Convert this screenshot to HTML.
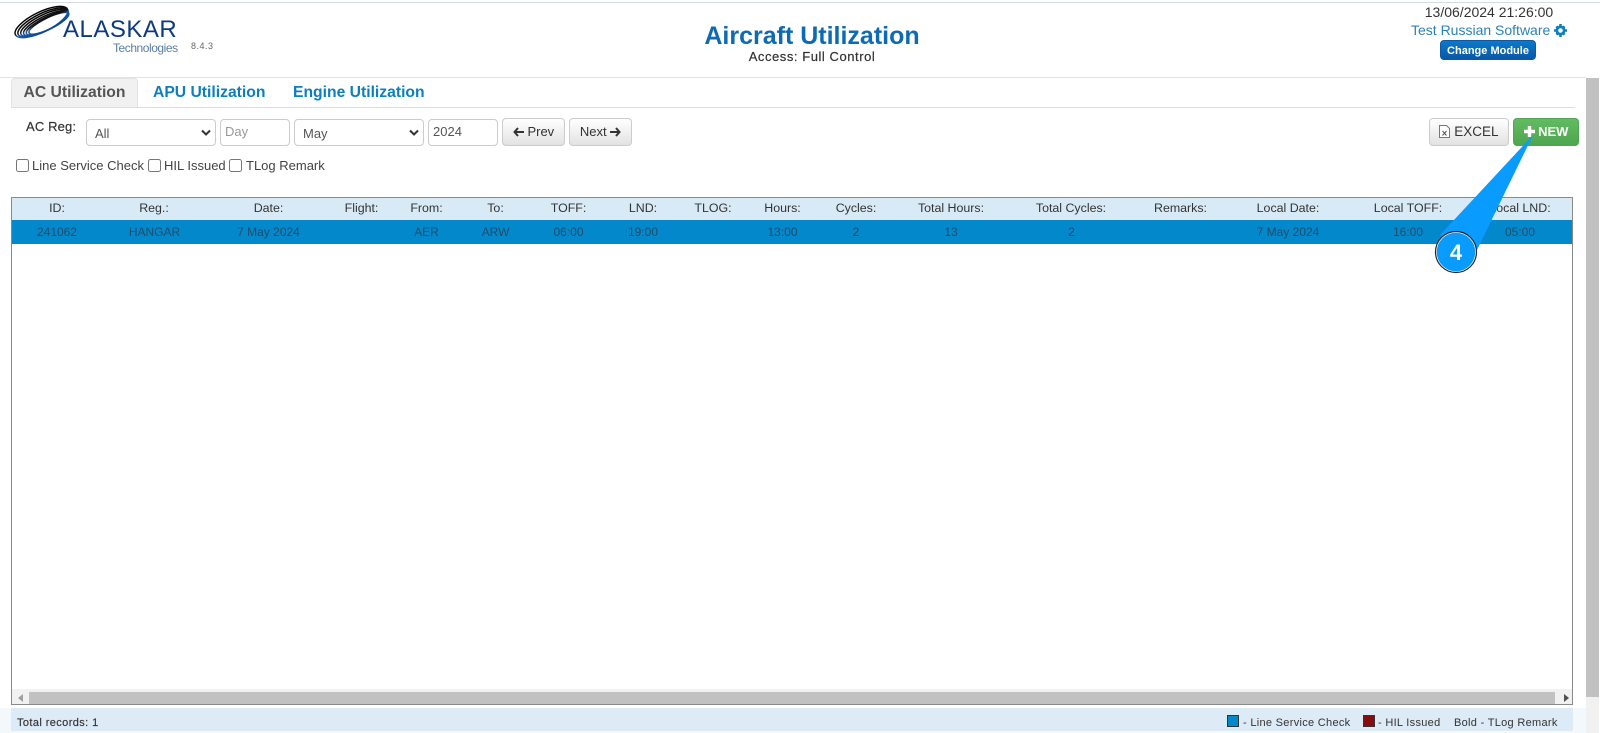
<!DOCTYPE html>
<html><head><meta charset="utf-8"><title>Aircraft Utilization</title>
<style>
html,body{margin:0;padding:0;background:#fff}
body{width:1600px;height:733px;position:relative;overflow:hidden;font-family:"Liberation Sans",Arial,sans-serif;color:#333}
.a{position:absolute;white-space:nowrap}
.c{position:absolute;white-space:nowrap;transform:translateX(-50%)}
.field{position:absolute;box-sizing:border-box;height:27px;top:119px;border:1px solid #ccc;border-radius:4px;background:#fff;font-size:13px;color:#555;line-height:27px;padding-left:8px}
.btn{position:absolute;box-sizing:border-box;top:118px;height:28px;border:1px solid #ccc;border-radius:4px;background:linear-gradient(#fff,#e2e2e2);font-size:13px;color:#333;text-align:center;line-height:26px}
.cb{position:absolute;top:159px;width:13px;height:13px;box-sizing:border-box;border:1px solid #767676;border-radius:2.5px;background:#fff}
.th{position:absolute;top:197px;height:23px;line-height:23px;font-size:12.4px;color:#333;white-space:nowrap;transform:translateX(-50%)}
.td{position:absolute;top:220px;height:24px;line-height:24px;font-size:12px;color:#1d4d6c;white-space:nowrap;transform:translateX(-50%)}
</style></head><body>
<div class="a" style="left:0;top:2px;width:1600px;height:1px;background:#d3dbe3"></div>
<div class="a" style="left:0;top:77px;width:1586px;height:1px;background:#e3e3e3"></div>

<svg class="a" style="left:0;top:0" width="80" height="42" viewBox="0 0 80 42">
<defs><linearGradient id="g" gradientUnits="userSpaceOnUse" x1="0" y1="-10" x2="0" y2="10"><stop offset="0" stop-color="#000"/><stop offset=".5" stop-color="#111"/><stop offset=".62" stop-color="#1a5ca6"/><stop offset="1" stop-color="#0d4a94"/></linearGradient></defs>
<g transform="translate(41.500 22) rotate(-26)" fill="none" stroke="url(#g)" stroke-width="1.500">
<ellipse cx="0" cy="0" rx="29" ry="10"/>
<ellipse cx="1.200" cy="1" rx="27.600" ry="9"/>
<ellipse cx="2.400" cy="2" rx="26.200" ry="8"/>
<ellipse cx="3.600" cy="3" rx="24.800" ry="7"/>
<ellipse cx="4.800" cy="3.800" rx="23.400" ry="6.200"/>
<ellipse cx="6" cy="4.400" rx="22" ry="5.600"/>
</g>
</svg>
<div class="a" style="left:63px;top:15px;font-size:24px;line-height:30px;color:#0d3a80;letter-spacing:.5px">ALASKAR</div>
<div class="a" style="left:113px;top:41px;font-size:12px;line-height:14px;color:#5b7ea6;letter-spacing:-.45px">Technologies</div>
<div class="a" style="left:191px;top:41px;font-size:9px;line-height:11px;color:#666;letter-spacing:.5px">8.4.3</div>

<div class="c" style="left:812px;top:20px;font-size:25px;line-height:32px;font-weight:bold;color:#0f6ab4">Aircraft Utilization</div>
<div class="c" style="left:812px;top:49px;font-size:13px;line-height:16px;color:#333;letter-spacing:.55px;-webkit-text-stroke:.2px #333">Access: Full Control</div>

<div class="c" style="left:1489px;top:4px;font-size:14px;line-height:16px;color:#333">13/06/2024 21:26:00</div>
<div class="a" style="left:1411px;top:22px;font-size:14px;line-height:16px;color:#2b82b8">Test Russian Software</div>
<svg class="a" style="left:1554px;top:24px" width="13" height="13" viewBox="0 0 13 13"><circle cx="6.500" cy="6.500" r="3.600" fill="none" stroke="#0c7fbe" stroke-width="2.600"/><path d="M5.200 0h2.600v2.500H5.200zM5.200 10.500h2.600V13H5.200zM0 5.200h2.500v2.600H0zM10.500 5.200H13v2.600h-2.500zM1.500 3.300l1.800-1.800 1.500 1.500-1.800 1.800zM8.200 10l1.800-1.800 1.500 1.500-1.800 1.800zM9.700 1.500l1.800 1.800L10 4.800 8.200 3zM3 8.200L4.800 10l-1.500 1.500-1.800-1.800z" fill="#0c7fbe"/></svg>
<div class="a" style="left:1440px;top:40px;width:96px;height:20px;border-radius:4px;background:linear-gradient(#0d79c9,#0a57a6);border:1px solid #0b5aa5;box-sizing:border-box;color:#fff;font-size:11px;font-weight:bold;text-align:center;line-height:20px">Change Module</div>

<div class="a" style="left:11px;top:78px;width:127px;height:29px;box-sizing:border-box;background:#f1f1f1;border:1px solid #e3e3e3;border-bottom:none;border-radius:4px 4px 0 0;text-align:center;font-size:15.700px;line-height:27px;font-weight:bold;color:#555">AC Utilization</div>
<div class="a" style="left:153px;top:78px;font-size:15.700px;line-height:29px;font-weight:bold;color:#0c7fc0">APU Utilization</div>
<div class="a" style="left:293px;top:78px;font-size:15.700px;line-height:29px;font-weight:bold;color:#0c7fc0">Engine Utilization</div>
<div class="a" style="left:11px;top:107px;width:1564px;height:1px;background:#ddd"></div>

<div class="a" style="left:26px;top:118px;font-size:13px;line-height:17px;color:#333;letter-spacing:.15px;-webkit-text-stroke:.2px #333">AC Reg:</div>
<div class="field" style="left:86px;width:130px">All<svg style="position:absolute;right:3px;top:9px" width="12" height="8" viewBox="0 0 12 8"><path d="M2 1.500l4 4 4-4" fill="none" stroke="#333" stroke-width="2"/></svg></div>
<div class="field" style="left:220px;width:70px;color:#999;line-height:24px;padding-left:4px">Day</div>
<div class="field" style="left:294px;width:130px">May<svg style="position:absolute;right:3px;top:9px" width="12" height="8" viewBox="0 0 12 8"><path d="M2 1.500l4 4 4-4" fill="none" stroke="#333" stroke-width="2"/></svg></div>
<div class="field" style="left:428px;width:70px;line-height:24px;padding-left:4px">2024</div>
<div class="btn" style="left:502px;width:63px"><svg width="11" height="10" viewBox="0 0 11 10" style="vertical-align:-1px"><path d="M5 1L1.500 5 5 9M2 5h9" fill="none" stroke="#333" stroke-width="2"/></svg> Prev</div>
<div class="btn" style="left:569px;width:63px">Next <svg width="11" height="10" viewBox="0 0 11 10" style="vertical-align:-1px"><path d="M6 1l3.500 4L6 9M9 5H0" fill="none" stroke="#333" stroke-width="2"/></svg></div>

<div class="cb" style="left:16px"></div><div class="a" style="left:32px;top:157px;font-size:13px;line-height:17px;color:#444">Line Service Check</div>
<div class="cb" style="left:148px"></div><div class="a" style="left:164px;top:157px;font-size:13px;line-height:17px;color:#444">HIL Issued</div>
<div class="cb" style="left:229px"></div><div class="a" style="left:246px;top:157px;font-size:13px;line-height:17px;color:#444">TLog Remark</div>

<div class="btn" style="left:1429px;width:80px;font-size:13.500px"><svg width="11" height="13" viewBox="0 0 11 13" style="vertical-align:-2px"><path d="M.5.500h7l3 3v9H.5z" fill="#fff" stroke="#777"/><path d="M3.500 6l4 4.500M7.500 6l-4 4.500" stroke="#555"/></svg> EXCEL</div>
<div class="btn" style="left:1513px;width:66px;background:linear-gradient(#62bb62,#4ea64e);border-color:#52a552;color:#fff;font-weight:bold;font-size:13px"><svg width="11" height="11" viewBox="0 0 11 11" style="vertical-align:-1px"><path d="M5.500 0v11M0 5.500h11" stroke="#fff" stroke-width="3.400"/></svg> NEW</div>

<div class="a" style="left:11px;top:197px;width:1562px;height:508px;box-sizing:border-box;border:1px solid #8a8a8a;background:#fff"></div>
<div class="a" style="left:12px;top:198px;width:1560px;height:22px;background:#d9eaf7"></div>
<div class="a" style="left:12px;top:220px;width:1560px;height:24px;background:#0388cb"></div>
<div class="th" style="left:57px">ID:</div><div class="th" style="left:154px">Reg.:</div><div class="th" style="left:268.500px">Date:</div><div class="th" style="left:361.500px">Flight:</div><div class="th" style="left:426.500px">From:</div><div class="th" style="left:495.500px">To:</div><div class="th" style="left:568.500px">TOFF:</div><div class="th" style="left:643px">LND:</div><div class="th" style="left:713px">TLOG:</div><div class="th" style="left:782.500px">Hours:</div><div class="th" style="left:856px">Cycles:</div><div class="th" style="left:951px">Total Hours:</div><div class="th" style="left:1071px">Total Cycles:</div><div class="th" style="left:1180.500px">Remarks:</div><div class="th" style="left:1288px">Local Date:</div><div class="th" style="left:1408px">Local TOFF:</div><div class="th" style="left:1520px">Local LND:</div>
<div class="td" style="left:57px">241062</div><div class="td" style="left:154.500px">HANGAR</div><div class="td" style="left:268.500px">7 May 2024</div><div class="td" style="left:426.500px">AER</div><div class="td" style="left:495.500px">ARW</div><div class="td" style="left:568.500px">06:00</div><div class="td" style="left:643px">19:00</div><div class="td" style="left:782.500px">13:00</div><div class="td" style="left:856px">2</div><div class="td" style="left:951px">13</div><div class="td" style="left:1071.500px">2</div><div class="td" style="left:1288px">7 May 2024</div><div class="td" style="left:1408px">16:00</div><div class="td" style="left:1520px">05:00</div>

<div class="a" style="left:12px;top:689px;width:1560px;height:15px;background:#f1f1f1"></div>
<div class="a" style="left:29px;top:692px;width:1526px;height:12px;background:#c1c1c1"></div>
<div class="a" style="left:18px;top:694px;width:0;height:0;border:4px solid transparent;border-right:5px solid #a0a0a0;border-left:0"></div>
<div class="a" style="left:1564px;top:694px;width:0;height:0;border:4px solid transparent;border-left:5px solid #505050;border-right:0"></div>

<div class="a" style="left:0;top:708px;width:1586px;height:25px;background:#f3f8fc"></div>
<div class="a" style="left:11px;top:708px;width:1562px;height:23px;background:#ddebf7"></div>
<div class="a" style="left:17px;top:717px;font-size:11px;line-height:13px;color:#333;letter-spacing:.4px;-webkit-text-stroke:.15px #333">Total records: 1</div>
<div class="a" style="left:1227px;top:715px;width:12px;height:12px;box-sizing:border-box;background:#0388cb;border:1px solid #333"></div>
<div class="a" style="left:1243px;top:717px;font-size:11px;line-height:13px;color:#333;letter-spacing:.3px">- Line Service Check</div>
<div class="a" style="left:1363px;top:715px;width:12px;height:12px;box-sizing:border-box;background:#850d0d;border:1px solid #333"></div>
<div class="a" style="left:1378px;top:717px;font-size:11px;line-height:13px;color:#333;letter-spacing:.3px">- HIL Issued</div>
<div class="a" style="left:1454px;top:717px;font-size:11px;line-height:13px;color:#333;letter-spacing:.3px">Bold - TLog Remark</div>

<div class="a" style="left:1586px;top:78px;width:13px;height:619px;background:#c1c1c1"></div>
<div class="a" style="left:1586px;top:697px;width:13px;height:36px;background:#f1f1f1"></div>

<svg class="a" style="left:0;top:0;pointer-events:none" width="1600" height="733">
<path d="M1533 135L1440 235L1476 252Z" fill="#0a9bff"/>
<circle cx="1456" cy="252" r="20" fill="#0a9bff" stroke="#fff" stroke-width="1.500"/>
<circle cx="1456" cy="252" r="20.500" fill="none" stroke="#222" stroke-width="1.200"/>
<text x="1456" y="260" style="font-family:'Liberation Sans',Arial,sans-serif;font-size:22px;font-weight:bold" fill="#fff" text-anchor="middle">4</text>
</svg>
</body></html>
